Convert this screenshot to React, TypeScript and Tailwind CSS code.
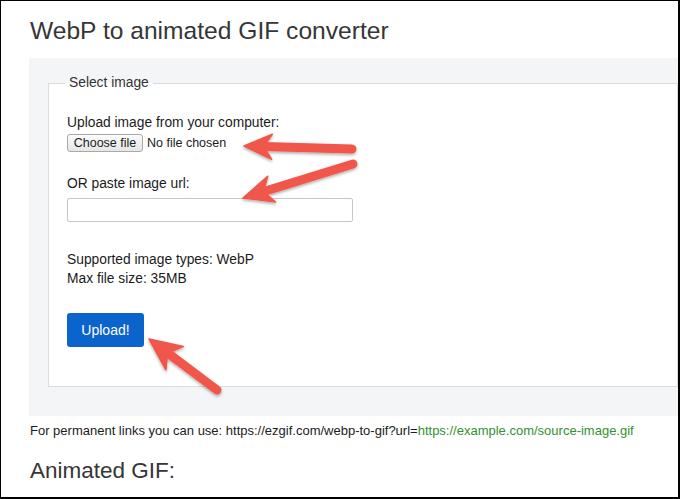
import React from "react";

type Pt = [number, number];

function arrowPath(tip: Pt, tail: Pt, headLen: number, headHalf: number) {
  const dx = tail[0] - tip[0];
  const dy = tail[1] - tip[1];
  const len = Math.hypot(dx, dy);
  const ux = dx / len;
  const uy = dy / len;
  const nx = -uy;
  const ny = ux;
  const at = (d: number, o: number): string =>
    `${(tip[0] + ux * d + nx * o).toFixed(1)},${(tip[1] + uy * d + ny * o).toFixed(1)}`;
  // tip, swept barbs, notch where the head meets the shaft
  return `M${at(0, 0)} L${at(headLen, headHalf)} L${at(headLen * 0.8, 4)} L${at(headLen * 0.8, -4)} L${at(headLen, -headHalf)} Z`;
}

const arrows: { tip: Pt; tail: Pt; head: number; half: number }[] = [
  { tip: [243, 145], tail: [351, 148], head: 28, half: 12.5 },
  { tip: [242, 197], tail: [352, 163], head: 30, half: 13.5 },
  { tip: [148, 338], tail: [216, 389], head: 32, half: 14.5 },
];

function Arrows() {
  return (
    <svg className="absolute inset-0 pointer-events-none" width="680" height="499" viewBox="0 0 680 499">
      <defs>
        <filter id="shadow" x="-20%" y="-20%" width="140%" height="140%">
          <feDropShadow dx="0" dy="1.5" stdDeviation="1.5" floodColor="#000" floodOpacity="0.35" />
        </filter>
      </defs>
      <g filter="url(#shadow)">
        {arrows.map((a, i) => {
          const dx = a.tail[0] - a.tip[0];
          const dy = a.tail[1] - a.tip[1];
          const len = Math.hypot(dx, dy);
          const sx = a.tip[0] + (dx / len) * (a.head * 0.7);
          const sy = a.tip[1] + (dy / len) * (a.head * 0.7);
          return (
            <g key={i}>
              <line x1={sx} y1={sy} x2={a.tail[0]} y2={a.tail[1]} stroke="#f1564b" strokeWidth="9" strokeLinecap="round" />
              <path d={arrowPath(a.tip, a.tail, a.head, a.half)} fill="#f1564b" stroke="#f1564b" strokeWidth="1.5" strokeLinejoin="round" />
            </g>
          );
        })}
      </g>
    </svg>
  );
}

export default function App() {
  return (
    <div
      className="relative w-[680px] h-[499px] overflow-hidden bg-white border-black border-l border-t border-r-2 border-b-2 text-[#1c1c1c]"
      style={{ fontFamily: '"Liberation Sans", Arial, sans-serif' }}
    >
      <h1 className="mt-[15px] ml-[29px] text-[24.6px] leading-[30px] text-[#363636] font-normal">
        WebP to animated GIF converter
      </h1>

      <div className="mt-[12px] ml-[28px] bg-[#f4f5f6] pl-[19px] pt-[17px] pb-[29px]">
        <fieldset className="border border-[#dcdcdc] bg-white pl-[18px] pb-[39px] text-[13.8px]">
          <legend className="ml-[-2px] px-[4px] leading-[16px] text-[#333]">Select image</legend>

          <div className="pt-[24px]">
            <div className="leading-[16px]">Upload image from your computer:</div>
            <div className="mt-[3px] flex items-center gap-[4px] leading-[16px]">
              <button
                type="button"
                className="h-[18px] w-[76px] rounded-[3px] border border-[#a9a9a9] bg-gradient-to-b from-[#fbfbfb] to-[#e6e6e6] text-[12.5px] leading-[16px] text-[#1c1c1c]"
              >
                Choose file
              </button>
              <span className="text-[12.5px]">No file chosen</span>
            </div>

            <div className="mt-[23.5px] leading-[16px]">OR paste image url:</div>
            <input
              type="text"
              className="mt-[6.5px] block w-[286px] h-[24px] rounded-[2px] border border-[#c6c6c6] bg-white outline-none"
            />

            <div className="mt-[28px] leading-[19px]">
              <div>Supported image types: WebP</div>
              <div>Max file size: 35MB</div>
            </div>

            <button
              type="button"
              className="mt-[25px] w-[77px] h-[34px] rounded-[3px] bg-[#0b63cc] text-white text-[14px]"
            >
              Upload!
            </button>
          </div>
        </fieldset>
      </div>

      <p className="mt-[7px] ml-[29px] text-[13px] leading-[16px] text-[#1c1c1c] whitespace-nowrap">
        For permanent links you can use: https://ezgif.com/webp-to-gif?url=
        <span className="text-[#33912f]">https://example.com/source-image.gif</span>
      </p>

      <h2 className="mt-[18px] ml-[29px] text-[22.5px] leading-[27px] text-[#363636] font-normal">Animated GIF:</h2>

      <Arrows />
    </div>
  );
}
